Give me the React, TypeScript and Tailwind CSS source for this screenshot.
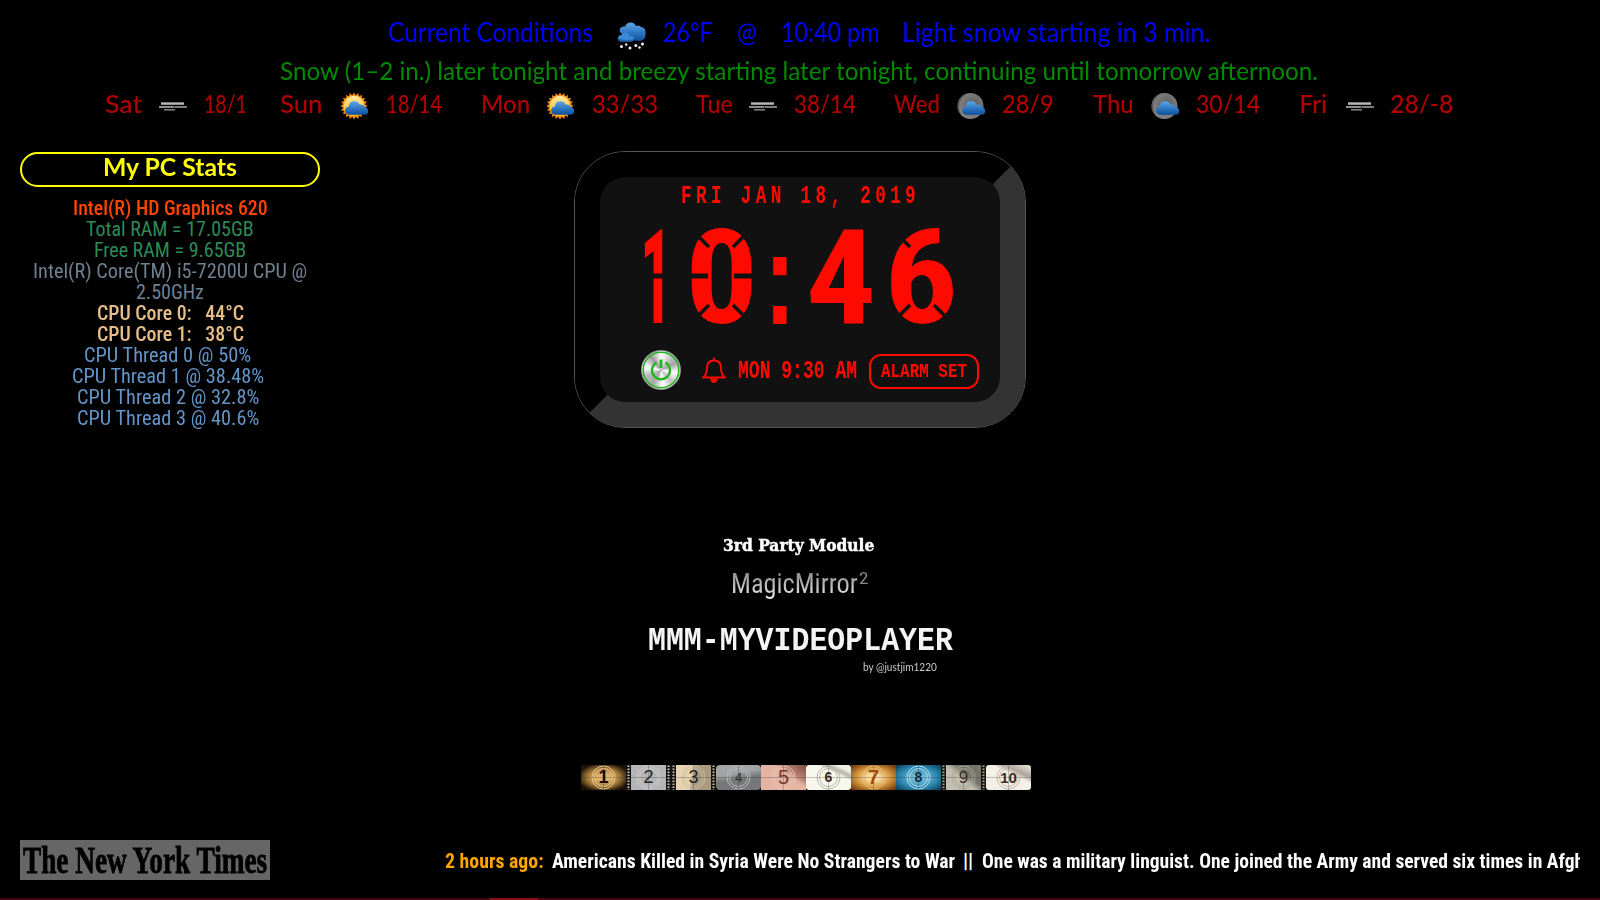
import { useLayoutEffect, useRef, type ReactNode } from "react";

/** A single line of text squeezed or stretched to the width of its box. */
function Fit({ className = "", inner = "", children }: { className?: string; inner?: string; children: ReactNode }) {
  const box = useRef<HTMLSpanElement>(null);
  const text = useRef<HTMLSpanElement>(null);
  useLayoutEffect(() => {
    const fit = () => {
      if (!box.current || !text.current) return;
      const natural = text.current.offsetWidth;
      if (natural) text.current.style.transform = `scaleX(${box.current.clientWidth / natural})`;
    };
    fit();
    document.fonts?.ready.then(fit);
  });
  return (
    <span ref={box} className={`inline-block shrink-0 whitespace-nowrap ${className}`}>
      <span ref={text} className={`inline-block origin-left whitespace-pre ${inner}`}>
        {children}
      </span>
    </span>
  );
}

const CLOUD = "M8 25 Q3 25 3 20.5 Q3 16.5 7 16 Q7.500 10.500 13 10.500 Q17 10.500 18.500 14 Q23.500 13 24.500 17 Q28 17.500 28 21 Q28 25 24 25 Z";

function Gradients() {
  return (
    <svg className="absolute size-0" aria-hidden="true">
      <defs>
        <linearGradient id="cloud" x1="0" y1="0" x2="0" y2="1">
          <stop offset="0" stopColor="#5aa6ea" />
          <stop offset="1" stopColor="#0c4f9e" />
        </linearGradient>
        <linearGradient id="sun" x1="0" y1="0" x2="0" y2="1">
          <stop offset="0" stopColor="#ffe9a0" />
          <stop offset="1" stopColor="#ffb81c" />
        </linearGradient>
        <radialGradient id="moon" cx="0.6" cy="0.45" r="0.6">
          <stop offset="0" stopColor="#5c5c5c" />
          <stop offset="1" stopColor="#858585" />
        </radialGradient>
      </defs>
    </svg>
  );
}

const RAYS = Array.from({ length: 40 }, (_, i) => {
  const r = i % 2 === 0 ? 13.6 : 11;
  const a = (i * Math.PI) / 20 - Math.PI / 2;
  return `${(14 + r * Math.cos(a)).toFixed(2)},${(14 + r * Math.sin(a)).toFixed(2)}`;
}).join(" ");

type Sky = "sun" | "moon" | "fog";

function SkyIcon({ kind }: { kind: Sky }) {
  if (kind === "fog")
    return (
      <svg viewBox="0 0 28 28" className="size-7">
        <rect x="2" y="10.300" width="23" height="2.500" fill="#b4b4b4" />
        <rect x="0" y="14" width="15" height="2" fill="#8c8c8c" />
        <rect x="15.500" y="14" width="12.500" height="2" fill="#7c7c7c" />
        <rect x="5" y="17" width="11" height="1.600" fill="#7c7c7c" />
      </svg>
    );
  return (
    <svg viewBox="0 0 28 28" className="size-7">
      {kind === "sun" ? (
        <>
          <polygon points={RAYS} fill="#f58a0b" />
          <circle cx="14" cy="14" r="10.300" fill="url(#sun)" />
        </>
      ) : (
        <>
          <circle cx="13.500" cy="14" r="13" fill="url(#moon)" />
          <path d="M9 2.500 A12 12 0 0 0 5 23 A14 14 0 0 1 9 2.500" fill="#3d3d3d" opacity="0.6" />
        </>
      )}
      <g transform="translate(2.400 -0.300) scale(0.92 0.92)">
        <path d={CLOUD} fill="url(#cloud)" />
      </g>
    </svg>
  );
}

function SnowIcon() {
  return (
    <svg viewBox="0 0 28 28" className="h-7 w-7">
      <path d="M5 12 Q0.500 11 2 6.500 Q3.500 4 7 4.500 Q9 0 13 0.500 Q16.500 0.500 18 4 Q21 2.500 23 5 Q27.500 5.500 27.500 10 Q28.500 18 22 19 L12 18 Z" fill="url(#cloud)" />
      <path d="M3.500 19.500 Q0 19.500 0 16 Q0.300 13 3.500 13 Q5 9.500 8.500 10.500 Q11 11 11.500 14 Q16 13.500 16 17 Q15.500 19.500 13 19.500 Z" fill="#3a8ad8" />
      <path d="M3.500 19.500 Q0 19.500 0 16.500 Q8 19 16 17 Q15.500 19.500 13 19.500 Z" fill="#1c61ad" />
      <g fill="#f4f4f4">
        <circle cx="3.500" cy="24.500" r="1.500" />
        <circle cx="8.200" cy="22.500" r="1.200" />
        <circle cx="12" cy="26" r="1.500" />
        <circle cx="17.800" cy="23.500" r="1.500" />
        <circle cx="21.500" cy="25.500" r="1.200" />
        <circle cx="24.500" cy="22" r="1.500" />
      </g>
    </svg>
  );
}

const DAYS: { day: string; temps: string; sky: Sky; dayBox: string; iconBox: string; tempBox: string }[] = [
  { day: "Sat", temps: "18/1", sky: "fog", dayBox: "ml-[105px] w-[37px]", iconBox: "ml-[17px]", tempBox: "ml-[17px] w-[43px]" },
  { day: "Sun", temps: "18/14", sky: "sun", dayBox: "ml-[33px] w-[43px]", iconBox: "ml-[17px]", tempBox: "ml-[18px] w-[56px]" },
  { day: "Mon", temps: "33/33", sky: "sun", dayBox: "ml-[39px] w-[49px]", iconBox: "ml-[16px]", tempBox: "ml-[18px] w-[66px]" },
  { day: "Tue", temps: "38/14", sky: "fog", dayBox: "ml-[38px] w-[37px]", iconBox: "ml-[16px]", tempBox: "ml-[17px] w-[62px]" },
  { day: "Wed", temps: "28/9", sky: "moon", dayBox: "ml-[38px] w-[46px]", iconBox: "ml-[17px]", tempBox: "ml-[17px] w-[52px]" },
  { day: "Thu", temps: "30/14", sky: "moon", dayBox: "ml-[39px] w-[41px]", iconBox: "ml-[17px]", tempBox: "ml-[17px] w-[64px]" },
  { day: "Fri", temps: "28/-8", sky: "fog", dayBox: "ml-[39px] w-[28px]", iconBox: "ml-[19px]", tempBox: "ml-[16px] w-[63px]" },
];

function Weather() {
  return (
    <header className="pt-[13px] font-['Lato','Noto_Sans',sans-serif]">
      <div className="flex h-[37px] items-center text-[26px] leading-[26px] text-[#0000ff]">
        <Fit className="ml-[388px] w-[205px]">Current Conditions</Fit>
        <span className="mt-2 ml-[25px]"><SnowIcon /></span>
        <Fit className="ml-[17px] w-[50px]">26°F</Fit>
        <Fit className="ml-[24px] w-[20px]">@</Fit>
        <Fit className="ml-[24px] w-[98px]">10:40 pm</Fit>
        <Fit className="ml-[23px] w-[308px]">Light snow starting in 3 min.</Fit>
      </div>
      <div className="flex h-[39px] items-center text-[25px] leading-[26px] text-[#008a00]">
        <Fit className="ml-[280px] w-[1038px]">Snow (1–2 in.) later tonight and breezy starting later tonight, continuing until tomorrow afternoon.</Fit>
      </div>
      <div className="flex h-[26px] items-center text-[24.5px] leading-[26px] font-medium text-[#b00000]">
        {DAYS.map((d) => (
          <div key={d.day} className="flex items-center pt-1">
            <Fit className={d.dayBox}>{d.day}</Fit>
            <span className={`mt-1 ${d.iconBox}`}><SkyIcon kind={d.sky} /></span>
            <Fit className={d.tempBox}>{d.temps}</Fit>
          </div>
        ))}
      </div>
    </header>
  );
}

const STATS = [
  { text: "Intel(R) HD Graphics 620", style: "w-[195px] text-[#ff4500] font-medium" },
  { text: "Total RAM = 17.05GB", style: "w-[168px] text-[#2e8b57]" },
  { text: "Free RAM = 9.65GB", style: "w-[152px] text-[#2e8b57]" },
  { text: "Intel(R) Core(TM) i5-7200U CPU @", style: "w-[274px] text-[#708090]" },
  { text: "2.50GHz", style: "w-[68px] text-[#708090]" },
  { text: "CPU Core 0:   44°C", style: "w-[147px] text-[#e6bd88] font-medium" },
  { text: "CPU Core 1:   38°C", style: "w-[147px] text-[#e6bd88] font-medium" },
  { text: "CPU Thread 0 @ 50%", style: "w-[167px] mr-[5px] text-[#6495c8]" },
  { text: "CPU Thread 1 @ 38.48%", style: "w-[192px] mr-[5px] text-[#6495c8]" },
  { text: "CPU Thread 2 @ 32.8%", style: "w-[182px] mr-[5px] text-[#6495c8]" },
  { text: "CPU Thread 3 @ 40.6%", style: "w-[182px] mr-[5px] text-[#6495c8]" },
];

function PcStats() {
  return (
    <section className="mt-px ml-5 w-[300px]">
      <h2 className="flex h-[35px] justify-center rounded-full border-2 border-[#ffff00] font-['Lato',sans-serif] text-[24px] leading-[26px] font-bold text-[#ffff00]">
        <Fit className="w-[134px]">My PC Stats</Fit>
      </h2>
      <div className="mt-[11px] flex flex-col items-center font-['Roboto',sans-serif] text-[20px] leading-[21px] [font-stretch:75%]">
        {STATS.map((s) => (
          <Fit key={s.text} className={s.style}>{s.text}</Fit>
        ))}
      </div>
    </section>
  );
}

function PowerButton() {
  return (
    <span className="flex size-10 items-center justify-center rounded-full border border-[#9a9a9a] bg-[conic-gradient(#fff,#bbb_12%,#a5a5a5_18%,#fff_28%,#c0c0c0_38%,#fff_48%,#aaa_58%,#b5b5b5_68%,#fff_78%,#999_90%,#fff)]">
      <svg viewBox="0 0 38 38" className="size-[38px]" fill="none" stroke="#22b422">
        <circle cx="19" cy="19" r="17.800" strokeWidth="1.500" />
        <path d="M14.500 11.500 A9 9 0 1 0 23.500 11.500" strokeWidth="2.300" />
        <path d="M19 8.500 V17" strokeWidth="3" />
      </svg>
    </span>
  );
}

function Bell() {
  return (
    <svg viewBox="0 0 24 27" className="h-[27px] w-6" fill="none" stroke="#ff0a00" strokeWidth="1.900" strokeLinejoin="round">
      <path d="M1 20.500 Q5 17.500 5 11 Q5 3.500 12 3.500 Q19 3.500 19 11 Q19 17.500 23 20.500 Z" />
      <path d="M12 1.200 V3" strokeLinecap="round" />
      <path d="M8 21.500 H16 Q15 26 12 26 Q9 26 8 21.500" fill="#ff0a00" stroke="none" />
    </svg>
  );
}

/** Dark gaps that break the big digits into LCD-like segments. */
function SegmentGaps() {
  return (
    <svg viewBox="0 0 400 124" className="pointer-events-none absolute inset-0 h-[124px] w-[400px]" stroke="#111111" strokeWidth="3.500">
      <path d="M40 62 H68 M86 62 H108 M134 62 H156" strokeWidth="5" />
      <path d="M88 12 L109 33 M154 12 L133 33 M88 112 L109 91 M154 112 L133 91" />
      <path d="M289 12 L310 33 M289 112 L310 91 M355 112 L334 91" />
    </svg>
  );
}

function Clock() {
  return (
    <section className="h-[277px] w-[452px] rounded-[51px] border border-[#555555]">
      <div className="h-[275px] w-[450px] rounded-[50px] border-[25px] border-t-black border-r-[#333333] border-b-[#333333] border-l-black bg-[#111111] text-[#ff0a00]">
        <div className="flex h-[37px] items-center pt-0.5 pl-[81px] font-['Liberation_Mono',monospace] text-[25px] leading-[30px] font-bold">
          <Fit className="w-[239px]" inner="tracking-[6px]">FRI JAN 18, 2019</Fit>
        </div>
        <div className="relative flex h-[124px] font-['Roboto',sans-serif] text-[131px] leading-[129px] font-bold [font-stretch:75%]">
          <Fit className="ml-[40px] w-[32px]">1</Fit>
          <Fit className="ml-[13px] w-[73px]">0</Fit>
          <Fit className="ml-[6px] w-[32px] font-['Liberation_Sans',sans-serif]">:</Fit>
          <Fit className="ml-[10px] w-[70px]">4</Fit>
          <Fit className="ml-[8px] w-[74px]">6</Fit>
          <SegmentGaps />
        </div>
        <div className="mt-[12px] flex h-10 items-center pl-[41px] font-['Liberation_Mono',monospace] font-bold">
          <PowerButton />
          <span className="ml-[21px]"><Bell /></span>
          <Fit className="mt-[4px] ml-[12px] w-[119px] text-[25px] leading-[40px]">MON 9:30 AM</Fit>
          <span className="mt-[3px] ml-[12px] flex h-[35px] w-[110px] items-center justify-center rounded-[12px] border-2 border-[#ff0a00]">
            <Fit className="w-[86px] text-[20px] leading-[31px]">ALARM SET</Fit>
          </span>
        </div>
      </div>
    </section>
  );
}

const FRAMES = [
  { n: "1", tile: "bg-[radial-gradient(ellipse,#e0b468_20%,#a77b38_50%,#1c1206_82%)] text-[#111111] font-bold text-[18px]", ring: "#e6cc98", perforated: false },
  { n: "2", tile: "bg-[#b5b5b7] text-[#222222] text-[18px]", ring: "#cccccc", perforated: true },
  { n: "3", tile: "bg-[linear-gradient(100deg,#e6d4b0_45%,#a99a80_50%)] text-[#222222] text-[18px]", ring: "#cbbda1", perforated: true },
  { n: "4", tile: "rounded-[4px] bg-[linear-gradient(170deg,#a2a4a5_35%,#757778_55%)] text-[#303030] text-[13px]", ring: "#b9b9b9", perforated: false },
  { n: "5", tile: "bg-[linear-gradient(35deg,#e4b3a2_60%,#b98274_70%,#7d4b42)] text-[#703c35] text-[20px]", ring: "#eac4b6", perforated: false },
  { n: "6", tile: "rounded-[3px] bg-[linear-gradient(25deg,#f7f7ee_65%,#b7b4a8_75%,#f0efe5_85%)] text-[#3c2a24] font-bold text-[14px]", ring: "#b9b7ac", perforated: false },
  { n: "7", tile: "bg-[radial-gradient(ellipse,#f8dca0_20%,#d3933c_55%,#6f3507_95%)] text-[#a5480b] font-bold text-[20px]", ring: "#e8bd75", perforated: false },
  { n: "8", tile: "bg-[radial-gradient(ellipse,#6db8d6_20%,#2c86ae_60%,#07364f_100%)] text-[#132b38] font-bold text-[14px]", ring: "#b4e0ef", perforated: false },
  { n: "9", tile: "bg-[linear-gradient(40deg,#c4bfb0_45%,#77756a_60%)] text-[#33302a] text-[17px]", ring: "#aaa799", perforated: true },
  { n: "10", tile: "rounded-[3px] bg-[linear-gradient(25deg,#f4f0e8_60%,#aaa499_72%,#efeae0)] text-[#3c2a24] font-bold text-[15px]", ring: "#c3b7a3", perforated: false },
];

function FilmStrip() {
  return (
    <div className="mt-[90px] ml-[7px] flex h-[25px] w-[450px] font-['Liberation_Sans',sans-serif]">
      {FRAMES.map((f) => (
        <div key={f.n} className={`grid h-[25px] w-[45px] place-items-center overflow-hidden ${f.tile}`}>
          <svg viewBox="0 0 45 25" className="col-start-1 row-start-1 h-[25px] w-[45px]" fill="none" stroke={f.ring}>
            <circle cx="22.500" cy="12.500" r="9" />
            <circle cx="22.500" cy="12.500" r="11.500" />
            <path d="M0 12.500 H45 M22.500 0 V25" stroke="#333333" strokeOpacity="0.4" strokeWidth="0.700" />
            {f.perforated && (
              <>
                <path d="M2.500 0 V25 M42.500 0 V25" stroke="#151412" strokeWidth="5" />
                <path d="M2.500 0.500 V25 M42.500 0.500 V25" strokeWidth="2" strokeDasharray="1.500 1.500" />
              </>
            )}
          </svg>
          <span className="col-start-1 row-start-1 leading-[25px]">{f.n}</span>
        </div>
      ))}
    </div>
  );
}

function VideoPlayer() {
  return (
    <section className="mt-[106px] flex flex-col">
      <Fit className="ml-[149px] h-6 w-[151px] font-['DejaVu_Serif',serif] text-[16.5px] leading-6 font-bold text-white" inner="[-webkit-text-stroke:0.5px_white]">3rd Party Module</Fit>
      <div className="mt-[8px] flex h-9 font-['Roboto',sans-serif] leading-9 font-normal [font-stretch:75%]">
        <Fit className="ml-[157px] w-[127px] text-[28px]" inner="bg-linear-to-b from-[#8f8f8f] from-20% to-[#e0e0e0] to-80% bg-clip-text text-transparent">MagicMirror</Fit>
        <Fit className="ml-px w-[9px] text-[17px] leading-6 text-[#888888]">2</Fit>
      </div>
      <Fit className="mt-[19px] ml-[74px] h-10 w-[305px] font-['Liberation_Mono',monospace] text-[34px] leading-10 font-bold text-[#f4f4f4]">MMM-MYVIDEOPLAYER</Fit>
      <Fit className="-mt-[2px] ml-[289px] h-4 w-[74px] font-['Lato',sans-serif] text-[11px] leading-4 text-[#c8c8c8]">by @justjim1220</Fit>
      <FilmStrip />
    </section>
  );
}

function NewsTicker() {
  return (
    <footer className="flex flex-col">
      <div className="flex h-10 items-center">
        <div className="ml-5 flex h-10 w-[250px] items-center bg-[#666666] pl-[3px] font-['Liberation_Serif',serif] text-[38px] leading-[38px] font-bold text-black">
          <Fit className="w-[244px]" inner="[-webkit-text-stroke:0.8px_black]">The New York Times</Fit>
        </div>
        <div className="mt-0.5 ml-[175px] flex w-[1135px] overflow-hidden font-['Roboto',sans-serif] text-[20px] leading-[24px] font-bold text-white [font-stretch:75%]">
          <Fit className="w-[99px] text-[#ffa500]">2 hours ago:</Fit>
          <Fit className="ml-[8px] w-[403px]">Americans Killed in Syria Were No Strangers to War</Fit>
          <Fit className="ml-[8px] w-[10px]">||</Fit>
          <Fit className="ml-[9px] w-[602px]">One was a military linguist. One joined the Army and served six times in Afgh</Fit>
        </div>
      </div>
      <div className="mt-[18px] flex h-[2px] bg-[#40060d]">
        <div className="ml-[490px] h-[2px] w-[48px] bg-[#8f0d18]" />
      </div>
    </footer>
  );
}

export default function App() {
  return (
    <div className="flex h-[900px] w-[1600px] flex-col overflow-hidden bg-black">
      <Gradients />
      <Weather />
      <main className="flex h-[689px] pt-[36px]">
        <PcStats />
        <div className="ml-[254px] w-[460px]">
          <Clock />
          <VideoPlayer />
        </div>
      </main>
      <div className="mt-[36px]">
        <NewsTicker />
      </div>
    </div>
  );
}
